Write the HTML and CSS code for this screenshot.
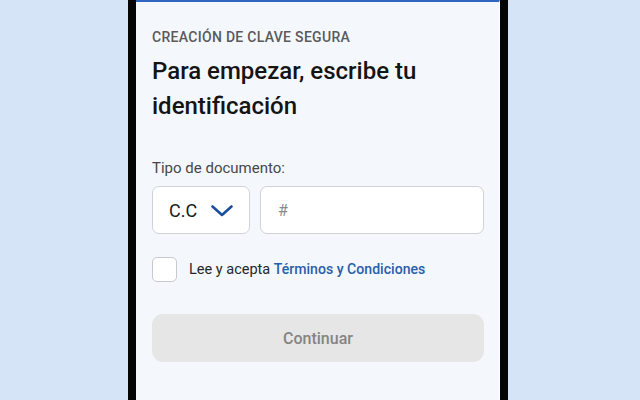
FILE: index.html
```html
<!DOCTYPE html>
<html lang="es">
<head>
<meta charset="utf-8">
<title>Creación de clave segura</title>
<link rel="stylesheet" href="styles.css">
</head>
<body>
<div class="stage">
  <div class="phone">
    <main class="panel">
      <p class="eyebrow">CREACIÓN DE CLAVE SEGURA</p>
      <h1 class="title">Para empezar, escribe tu identificación</h1>
      <p class="label">Tipo de documento:</p>
      <div class="fields">
        <div class="select">
          <span class="select-value">C.C</span>
          <svg class="chevron" width="22" height="12" viewBox="0 0 22 12" aria-hidden="true">
            <path d="M1.5 1.5 L11 10 L20.5 1.5" fill="none" stroke="#1d4e9e" stroke-width="2.6" stroke-linecap="round" stroke-linejoin="round"/>
          </svg>
        </div>
        <div class="input"><span class="placeholder">#</span></div>
      </div>
      <div class="terms">
        <span class="checkbox"></span>
        <span class="terms-text">Lee y acepta <span class="link">Términos y Condiciones</span></span>
      </div>
      <div class="button">Continuar</div>
    </main>
  </div>
</div>
</body>
</html>
```
FILE: styles.css
```css
* { box-sizing: border-box; }
html, body { margin: 0; padding: 0; }
body {
  background: #d5e5f7;
  font-family: Roboto, "Noto Sans", "Liberation Sans", sans-serif;
  width: 640px;
  height: 400px;
  overflow: hidden;
}
.stage {
  display: flex;
  justify-content: center;
  height: 400px;
}
.phone {
  width: 380px;
  height: 400px;
  margin-left: -4px;
  background: #050505;
  padding: 0 8px;
}
.panel {
  height: 100%;
  background: #f4f8fd;
  border-top: 2px solid #3066c2;
  border-right: 1px solid #ffffff;
  padding: 27px 15px 0 16px;
  display: flex;
  flex-direction: column;
}
.eyebrow {
  margin: 0;
  font-size: 14px;
  line-height: 16px;
  font-weight: 500;
  color: #5a5a5a;
  letter-spacing: 0.3px;
}
.title {
  margin: 9px 0 0;
  font-size: 24px;
  line-height: 35px;
  font-weight: 500;
  color: #141414;
  width: 300px;
}
.label {
  margin: 34px 0 0;
  font-size: 15px;
  line-height: 20px;
  color: #474747;
}
.fields {
  margin-top: 8px;
  display: flex;
  gap: 10px;
}
.select {
  width: 98px;
  height: 48px;
  background: #ffffff;
  border: 1px solid #cfd2d6;
  border-radius: 7px;
  display: flex;
  align-items: center;
  padding-left: 16px;
  gap: 14px;
}
.select-value {
  font-size: 18px;
  color: #1a1a1a;
}
.chevron { display: block; margin-top: 1px; }
.input {
  flex: 1;
  height: 48px;
  background: #ffffff;
  border: 1px solid #cfd2d6;
  border-radius: 7px;
  display: flex;
  align-items: center;
  padding-left: 17px;
}
.placeholder {
  font-size: 16px;
  color: #8a8a8a;
}
.terms {
  margin-top: 23px;
  display: flex;
  align-items: center;
  gap: 12px;
}
.checkbox {
  width: 25px;
  height: 25px;
  border: 1px solid #c6c9cd;
  border-radius: 5px;
  background: #ffffff;
}
.terms-text {
  font-size: 14.5px;
  color: #262626;
}
.link {
  font-size: 14.1px;
  color: #2a5ea8;
  font-weight: 500;
}
.button {
  margin-top: 32px;
  height: 48px;
  border-radius: 11px;
  background: #e6e6e6;
  color: #848484;
  font-size: 16px;
  font-weight: 500;
  display: flex;
  align-items: center;
  justify-content: center;
}
```
